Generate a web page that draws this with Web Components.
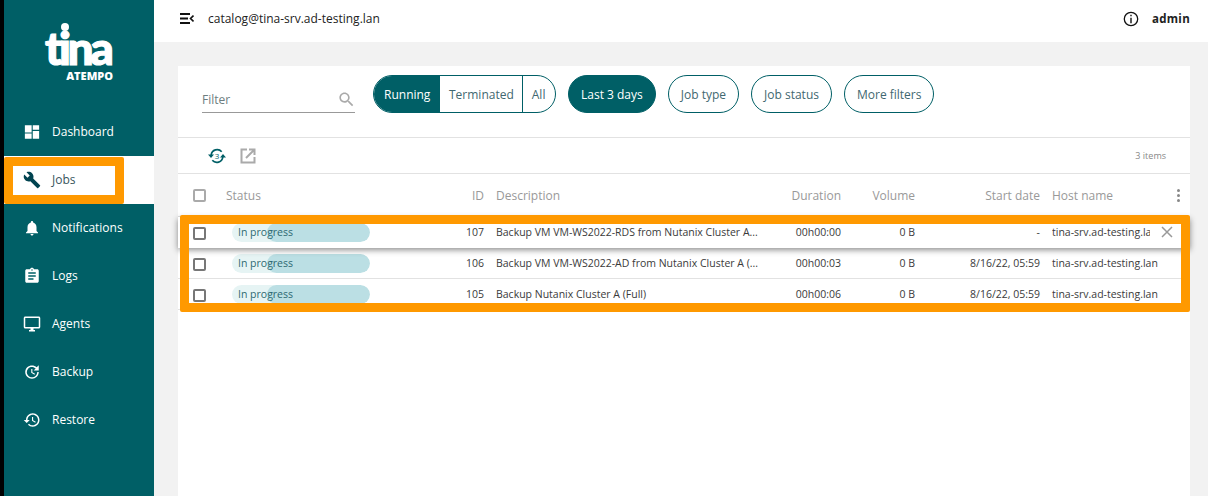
<!DOCTYPE html>
<html>
<head>
<meta charset="utf-8">
<style>
  html, body { margin: 0; height: 100%; overflow: hidden; }
  body { font-family: "Open Sans", sans-serif; font-size: 12px; color: #333; background: #f2f2f2; }
  #app { display: flex; height: 496px; }
  #main { flex: 1; display: flex; flex-direction: column; min-width: 0; }
  #content { flex: 1; padding: 24px 18px 0 24px; min-height: 0; }
</style>
</head>
<body>
<div id="app">
  <side-bar>
    <nav-item icon="dashboard" label="Dashboard"></nav-item>
    <nav-item icon="jobs" label="Jobs" active></nav-item>
    <nav-item icon="bell" label="Notifications"></nav-item>
    <nav-item icon="logs" label="Logs"></nav-item>
    <nav-item icon="agents" label="Agents"></nav-item>
    <nav-item icon="backup" label="Backup"></nav-item>
    <nav-item icon="restore" label="Restore"></nav-item>
  </side-bar>
  <div id="main">
    <top-bar catalog="catalog@tina-srv.ad-testing.lan" user="admin"></top-bar>
    <div id="content">
      <jobs-card>
        <filter-bar slot="filters"></filter-bar>
        <job-row slot="rows" job="107" desc="Backup VM VM-WS2022-RDS from Nutanix Cluster A..." duration="00h00:00" volume="0 B" date="-" host="tina-srv.ad-testing.lan" hovered></job-row>
        <job-row slot="rows" job="106" desc="Backup VM VM-WS2022-AD from Nutanix Cluster A (..." duration="00h00:03" volume="0 B" date="8/16/22, 05:59" host="tina-srv.ad-testing.lan"></job-row>
        <job-row slot="rows" job="105" desc="Backup Nutanix Cluster A (Full)" duration="00h00:06" volume="0 B" date="8/16/22, 05:59" host="tina-srv.ad-testing.lan"></job-row>
      </jobs-card>
    </div>
  </div>
</div>

<script>
const ICONS = {
  dashboard: 'M2.500 3h9v9.500h-9zM2.500 14h9v7h-9zM13 3h8.500v6H13zM13 10.500h8.500V21H13z',
  jobs: 'M22.7 19l-9.1-9.1c.9-2.3.4-5-1.5-6.9-2-2-5-2.4-7.4-1.3L9 6 6 9 1.6 4.7C.4 7.1.9 10.1 2.9 12.1c1.9 1.9 4.6 2.4 6.9 1.5l9.1 9.1c.4.4 1 .4 1.4 0l2.3-2.3c.5-.4.5-1.1.1-1.4z',
  bell: 'M12 22c1.1 0 2-.9 2-2h-4c0 1.1.9 2 2 2zm6-6v-5c0-3.07-1.63-5.64-4.5-6.32V4c0-.83-.67-1.5-1.5-1.5s-1.5.67-1.5 1.5v.68C7.64 5.36 6 7.92 6 11v5l-2 2v1h16v-1l-2-2z',
  logs: 'M19 3h-4.18C14.4 1.84 13.3 1 12 1c-1.3 0-2.4.84-2.82 2H5c-1.1 0-2 .9-2 2v14c0 1.1.9 2 2 2h14c1.1 0 2-.9 2-2V5c0-1.1-.9-2-2-2zm-7 0c.55 0 1 .45 1 1s-.45 1-1 1-1-.45-1-1 .45-1 1-1zm2 14H7v-2h7v2zm3-4H7v-2h10v2zm0-4H7V7h10v2z',
  agents: 'M21 2H3c-1.1 0-2 .9-2 2v12c0 1.1.9 2 2 2h7v2H8v2h8v-2h-2v-2h7c1.1 0 2-.9 2-2V4c0-1.1-.9-2-2-2zm0 14H3V4h18v12z',
  backup: 'M21 10.12h-6.78l2.74-2.82c-2.73-2.7-7.15-2.8-9.88-.1-2.73 2.71-2.73 7.08 0 9.79s7.15 2.71 9.88 0C18.32 15.65 19 14.08 19 12.1h2c0 1.98-.88 4.55-2.64 6.29-3.51 3.48-9.21 3.48-12.72 0-3.5-3.47-3.53-9.11-.02-12.58s9.14-3.47 12.65 0L21 3v7.12zM12.5 8v4.25l3.5 2.08-.72 1.21L11 13V8h1.5z',
  restore: 'M13 3c-4.97 0-9 4.03-9 9H1l3.89 3.89.07.14L9 12H6c0-3.87 3.13-7 7-7s7 3.13 7 7-3.13 7-7 7c-1.93 0-3.68-.79-4.94-2.06l-1.42 1.42C8.27 19.99 10.51 21 13 21c4.97 0 9-4.03 9-9s-4.03-9-9-9zm-1 5v5l4.28 2.54.72-1.21-3.5-2.08V8H12z'
};

class SideBar extends HTMLElement {
  constructor() {
    super();
    this.attachShadow({mode: "open"}).innerHTML = `
    <style>
      :host {
        display: block;
        width: 150px;
        flex: none;
        border-left: 4px solid #000;
        background: #005f66;
        color: #fff;
      }
      .logo {
        position: relative;
        height: 108px;
        box-sizing: border-box;
        padding: 25px 0 0 38px;
        font-family: Lato, sans-serif;
      }
      .tina {
        display: block;
        margin-left: 3px;
        font-size: 46px;
        font-weight: 900;
        line-height: 46px;
        letter-spacing: -3.4px;
        -webkit-text-stroke: 1.2px #fff;
      }
      .dot {
        position: absolute;
        left: 57px;
        top: 23px;
        width: 8px;
        height: 8px;
        border-radius: 50%;
        background: #fff;
      }
      .atempo {
        display: block;
        width: 71px;
        text-align: right;
        font-family: "Open Sans", sans-serif;
        font-size: 11px;
        font-weight: 800;
        line-height: 10px;
      }
    </style>
    <div class="logo"><span class="tina">tina</span><i class="dot"></i><span class="atempo">ATEMPO</span></div>
    <slot></slot>`;
  }
}
customElements.define("side-bar", SideBar);

class NavItem extends HTMLElement {
  constructor() {
    super();
    const active = this.hasAttribute("active");
    this.attachShadow({mode: "open"}).innerHTML = `
    <style>
      :host {
        display: flex;
        align-items: center;
        position: relative;
        height: 48px;
        padding-left: 19px;
        font-size: 12px;
        color: ${active ? "#38555c" : "#fff"};
        background: ${active ? "#fff" : "transparent"};
      }
      svg { width: 18px; height: 18px; fill: ${active ? "#004350" : "#fff"}; margin-right: 11px; }
      span { margin-bottom: 2px; }
      .mark {
        position: absolute;
        left: 0;
        top: 1px;
        width: 102px;
        height: 29px;
        border: 9px solid #ff9900;
        border-radius: 2px;
      }
    </style>
    <svg viewBox="0 0 24 24"><path d="${ICONS[this.getAttribute("icon")]}"/></svg>
    <span>${this.getAttribute("label")}</span>
    ${active ? '<div class="mark"></div>' : ''}`;
  }
}
customElements.define("nav-item", NavItem);

class TopBar extends HTMLElement {
  constructor() {
    super();
    this.attachShadow({mode: "open"}).innerHTML = `
    <style>
      :host {
        display: flex;
        align-items: center;
        flex: none;
        height: 42px;
        padding: 0 18px 5px 26px;
        box-sizing: border-box;
        background: #fff;
        color: #222;
        font-size: 12px;
      }
      .menu { width: 14px; height: 11px; margin-right: 14px; }
      .catalog { flex: 1; }
      .info { width: 16px; height: 16px; margin-right: 13px; }
      .user { font-weight: 700; font-size: 11.5px; letter-spacing: .3px; }
    </style>
    <svg class="menu" viewBox="0 0 14 11"><path d="M0 0h10v2H0zM0 4.500h8v2H0zM0 9h10v2H0z" fill="#111"/><path d="M13.500 2.500L10.500 5.500l3 3" fill="none" stroke="#111" stroke-width="1.600"/></svg>
    <span class="catalog">${this.getAttribute("catalog")}</span>
    <svg class="info" viewBox="0 0 16 16"><circle cx="8" cy="8" r="6.700" fill="none" stroke="#111" stroke-width="1.300"/><path d="M7.300 3.800h1.400v1.500H7.300zM7.300 6.700h1.400v5.500H7.300z" fill="#111"/></svg>
    <span class="user">${this.getAttribute("user")}</span>`;
  }
}
customElements.define("top-bar", TopBar);

class FilterBar extends HTMLElement {
  constructor() {
    super();
    this.attachShadow({mode: "open"}).innerHTML = `
    <style>
      :host {
        display: flex;
        align-items: center;
        height: 72px;
        padding: 0 0 15px 24px;
        box-sizing: border-box;
        border-bottom: 1px solid #e2e2e2;
        font-size: 12px;
        color: #3f6870;
      }
      .filter {
        display: flex;
        align-items: center;
        justify-content: space-between;
        width: 153px;
        height: 25px;
        box-sizing: border-box;
        margin: 12px 18px 0 0;
        border-bottom: 1px solid #999;
        color: #6d7d80;
      }
      .filter svg { width: 19px; height: 19px; fill: #aaa; margin-right: -1px; }
      .group {
        display: flex;
        width: 183px;
        flex: none;
        height: 38px;
        box-sizing: border-box;
        border: 1px solid #005f66;
        border-radius: 19px;
        overflow: hidden;
        margin-right: 12px;
      }
      .group span { display: flex; align-items: center; padding: 0 9px; }
      .group .on { background: #005f66; color: #fff; padding: 0 9px 0 10px; width: 47px; }
      .group span + span { border-left: 1px solid #005f66; }
      .group .on + span { border-left: 0; padding-right: 8px; }
      .pill {
        display: flex;
        align-items: center;
        height: 38px;
        box-sizing: border-box;
        padding: 0 12px;
        border: 1px solid #005f66;
        border-radius: 19px;
        margin-right: 12px;
      }
      .pill.on { background: #005f66; color: #fff; }
    </style>
    <div class="filter"><span>Filter</span>
      <svg viewBox="0 0 24 24"><path d="M15.500 14h-.79l-.28-.27C15.410 12.590 16 11.110 16 9.500 16 5.910 13.090 3 9.500 3S3 5.910 3 9.500 5.910 16 9.500 16c1.610 0 3.090-.59 4.230-1.570l.27.28v.79l5 4.990L20.490 19l-4.990-5zm-6 0C7.010 14 5 11.990 5 9.500S7.010 5 9.500 5 14 7.010 14 9.500 11.990 14 9.500 14z"/></svg>
    </div>
    <div class="group"><span class="on">Running</span><span>Terminated</span><span>All</span></div>
    <div class="pill on">Last 3 days</div>
    <div class="pill">Job type</div>
    <div class="pill">Job status</div>
    <div class="pill">More filters</div>`;
  }
}
customElements.define("filter-bar", FilterBar);

const COLUMNS = "33px 234px 24px 298px 59px 74px 125px 1fr";

class JobsCard extends HTMLElement {
  constructor() {
    super();
    this.attachShadow({mode: "open"}).innerHTML = `
    <style>
      :host { display: block; height: 100%; background: #fff; }
      .tools {
        display: flex;
        align-items: center;
        height: 36px;
        box-sizing: border-box;
        padding: 0 24px 0 30px;
        border-bottom: 1px solid #e2e2e2;
      }
      .sync { width: 18px; height: 18px; margin-right: 13px; }
      .open { width: 18px; height: 18px; flex: none; }
      .count { margin-left: auto; font-size: 9px; color: #888; }
      .head {
        display: grid;
        grid-template-columns: ${COLUMNS};
        align-items: center;
        height: 43px;
        box-sizing: border-box;
        padding-left: 15px;
        border-bottom: 1px solid #e2e2e2;
        font-size: 12px;
        color: #999;
      }
      .box { width: 13px; height: 13px; box-sizing: border-box; border: 2px solid #aaa; border-radius: 2px; }
      .right { text-align: right; }
      .desc { padding-left: 12px; }
      .host { padding-left: 12px; display: flex; justify-content: space-between; align-items: center; padding-right: 10px; }
      .kebab { display: flex; flex-direction: column; gap: 2px; }
      .kebab i { width: 3px; height: 3px; border-radius: 50%; background: #888; }
      .rows { position: relative; }
      .mark {
        position: absolute;
        left: 2px;
        right: 0;
        top: -2px;
        bottom: -2px;
        border: 9px solid #ff9900;
        border-radius: 2px;
        z-index: 2;
      }
    </style>
    <slot name="filters"></slot>
    <div class="tools">
      <svg class="sync" viewBox="0 0 18 18">
        <path d="M3.200 8a6 6 0 0 1 10.500-3.300M14.800 10a6 6 0 0 1-10.500 3.300" fill="none" stroke="#005f66" stroke-width="1.700"/>
        <path d="M0 7.500h6L3 11zM12 10.500h6L15 7z" fill="#005f66"/>
        <text x="9" y="11.500" font-size="8" text-anchor="middle" fill="#005f66" font-family="Open Sans">3</text>
      </svg>
      <svg class="open" viewBox="0 0 18 18"><path d="M8 2.500H2.500v13h13V10" fill="none" stroke="#aaa" stroke-width="2"/><path d="M7 11l8-8M10 2.500h5.500V8" fill="none" stroke="#aaa" stroke-width="2"/></svg>
      <span class="count">3 items</span>
    </div>
    <div class="head">
      <div class="box"></div>
      <div>Status</div>
      <div class="right">ID</div>
      <div class="desc">Description</div>
      <div class="right">Duration</div>
      <div class="right">Volume</div>
      <div class="right">Start date</div>
      <div class="host"><span>Host name</span><span class="kebab"><i></i><i></i><i></i></span></div>
    </div>
    <div class="rows"><slot name="rows"></slot><div class="mark"></div></div>`;
  }
}
customElements.define("jobs-card", JobsCard);

class JobRow extends HTMLElement {
  constructor() {
    super();
    const hovered = this.hasAttribute("hovered");
    const a = n => this.getAttribute(n);
    this.attachShadow({mode: "open"}).innerHTML = `
    <style>
      :host {
        display: grid;
        grid-template-columns: ${COLUMNS};
        align-items: center;
        position: relative;
        height: 31px;
        box-sizing: border-box;
        padding: 0 0 0 15px;
        border-bottom: 1px solid #e2e2e2;
        background: #fff;
        font-size: 10.5px;
        color: #3a3a3a;
        ${hovered ? "box-shadow: 0 2px 6px rgba(0,0,0,.45); z-index: 1; border-bottom-color: transparent;" : ""}
      }
      .box { width: 13px; height: 13px; box-sizing: border-box; border: 2px solid #777; border-radius: 2px; margin-top: 2px; }
      .status {
        position: relative;
        width: 138px;
        height: 19px;
        margin-left: 6px;
        border-radius: 10px;
        background: #e6f4f4;
        line-height: 18px;
        color: #2e6a72;
        overflow: hidden;
      }
      .status i { position: absolute; right: 0; top: 0; bottom: 0; width: 103px; border-radius: 10px; background: #bbdfe4; }
      .status span { position: relative; padding-left: 6px; }
      .right { text-align: right; margin-bottom: 1px; }
      .desc { padding-left: 12px; white-space: nowrap; margin-bottom: 1px; }
      .host { padding-left: 12px; white-space: nowrap; display: flex; align-items: center; margin-bottom: 1px; }
      .name { ${hovered ? "width: 98px; overflow: hidden;" : ""} }
      .close { width: 12px; height: 12px; margin-left: 11px; }
    </style>
    <div class="box"></div>
    <div><div class="status"><i></i><span>In progress</span></div></div>
    <div class="right">${a("job")}</div>
    <div class="desc">${a("desc")}</div>
    <div class="right">${a("duration")}</div>
    <div class="right">${a("volume")}</div>
    <div class="right">${a("date")}</div>
    <div class="host"><span class="name">${a("host")}</span>${hovered ? '<svg class="close" viewBox="0 0 12 12"><path d="M1 1l10 10M11 1L1 11" stroke="#999" stroke-width="1.500"/></svg>' : ''}</div>`;
  }
}
customElements.define("job-row", JobRow);
</script>
</body>
</html>
